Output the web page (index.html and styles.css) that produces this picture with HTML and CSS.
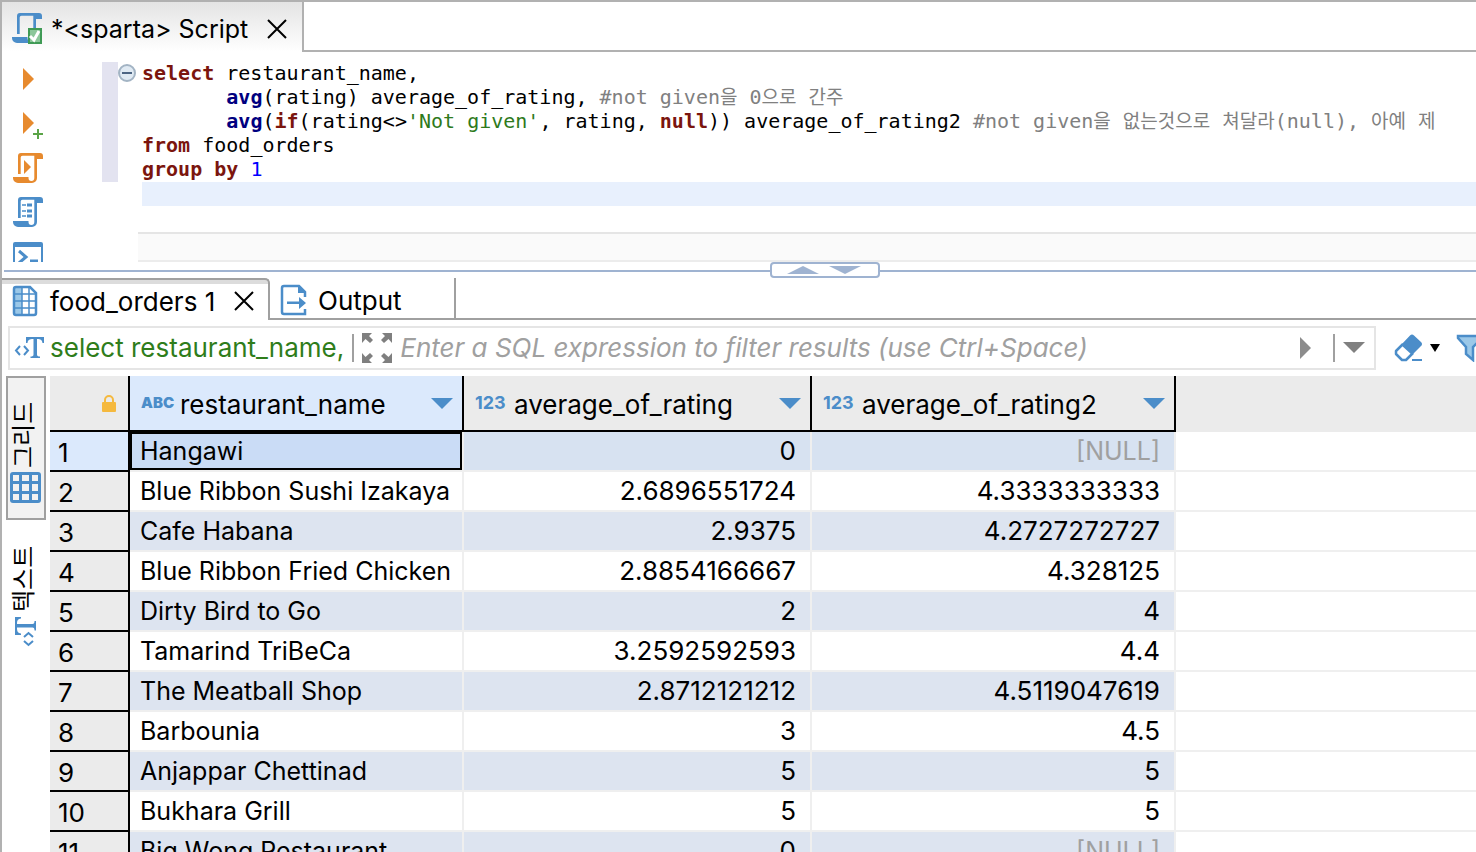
FILE: index.html
```html
<!DOCTYPE html>
<html lang="ko">
<head>
    <meta charset="UTF-8">
    <meta name="viewport" content="width=device-width, initial-scale=1.0">
    <title>*&lt;sparta&gt; Script</title>
    <link rel="stylesheet" href="styles.css">
</head>
<body>
<svg class="defs" aria-hidden="true">
    <symbol id="scroll" viewBox="0 0 30 30">
        <path fill="currentColor" d="M5 21V3a3 3 0 0 1 3-3h19a3 3 0 0 1 3 3v3h-6v19a5 5 0 0 1-5 5H5a5 5 0 0 1-5-5v-1h15.500v1a2.900 2.900 0 0 0 5.800 0V2.700H9.500a1.800 1.800 0 0 0-1.800 1.800V21z"/>
    </symbol>
    <symbol id="text-mode" viewBox="0 0 31 21">
        <path fill="none" stroke="currentColor" stroke-width="2" d="M6 9L2 13.500L6 18M10 9L14 13.500L10 18"/>
        <path fill="currentColor" d="M12 0H30V6H28.500C28 3 27 2 23 2V17.500C23 19 24 19.500 26 19.500V21H16.500V19.500C18.500 19.500 19.500 19 19.500 17.500V2C15 2 14 3 13.500 6H12z"/>
    </symbol>
    <symbol id="close" viewBox="0 0 20 20">
        <path fill="none" stroke="currentColor" stroke-width="2" d="M1 1L19 19M19 1L1 19"/>
    </symbol>
    <symbol id="arrow-down" viewBox="0 0 22 11">
        <path fill="currentColor" d="M0 0H22L11 11z"/>
    </symbol>
</svg>

<div class="window">
    <div class="editor-tabs">
        <div class="editor-tab">
            <svg class="icon blue" viewBox="0 0 32 32">
                <use href="#scroll" width="30" height="30"/>
                <rect x="16" y="15" width="14" height="16" fill="#3f9a55"/>
                <rect x="18" y="17" width="10" height="12" fill="#8cc79a"/>
                <path fill="none" stroke="#fff" stroke-width="3" d="M18 23L22 27L27 18"/>
            </svg>
            <span class="tab-title">*&lt;sparta&gt; Script</span>
            <button class="close" aria-label="Close script"><svg width="20" height="20"><use href="#close"/></svg></button>
        </div>
    </div>

    <div class="editor">
        <div class="toolbar">
            <button aria-label="Execute"><svg class="icon" viewBox="0 0 32 32"><path fill="#e78a2e" d="M11 5L22 16L11 27z"/></svg></button>
            <button aria-label="Execute in new tab"><svg class="icon" viewBox="0 0 32 32"><path fill="#e78a2e" d="M11 5L22 16L11 27z"/><path stroke="#5aa447" stroke-width="2" d="M21 27H31M26 22V32"/></svg></button>
            <button aria-label="Execute script"><svg class="icon orange" viewBox="0 0 32 32"><use href="#scroll" x="1" y="2" width="30" height="30"/><path fill="currentColor" d="M12 9L19 16L12 23z"/></svg></button>
            <button aria-label="Explain plan"><svg class="icon blue" viewBox="0 0 32 32"><use href="#scroll" x="1" y="2" width="30" height="30"/><path stroke="currentColor" stroke-width="3" d="M15 10H20M15 16H20M15 21H20"/><path stroke="currentColor" stroke-width="1.500" d="M10 10H14M10 16H14M10 21H14"/></svg></button>
            <button aria-label="Open console"><svg class="icon blue" viewBox="0 0 32 32"><path fill="currentColor" d="M3 3H29A2 2 0 0 1 31 5V31H29V8H3V31H1V5A2 2 0 0 1 3 3z"/><path fill="none" stroke="currentColor" stroke-width="3" d="M7 12L14 18L7 24"/><path stroke="currentColor" stroke-width="3" d="M18 22H26"/></svg></button>
        </div>
        <div class="ruler"></div>
        <div class="folding">
            <button aria-label="Collapse"><svg width="18" height="18" viewBox="0 0 18 18"><circle cx="9" cy="9" r="8" fill="#e0eaf3" stroke="#a3b4c4" stroke-width="2"/><path stroke="#4c6583" stroke-width="2" d="M4 9H14"/></svg></button>
        </div>
        <div class="code">
<pre><b class="kw">select</b> restaurant_name,
       <b class="fn">avg</b>(rating) average_of_rating, <span class="comment">#not given<span class="ko">을</span> 0<span class="ko">으로</span> <span class="ko">간주</span></span>
       <b class="fn">avg</b>(<b class="kw">if</b>(rating&lt;&gt;<span class="str">'Not given'</span>, rating, <b class="kw">null</b>)) average_of_rating2 <span class="comment">#not given<span class="ko">을</span> <span class="ko">없는것으로</span> <span class="ko">쳐달라</span>(null), <span class="ko">아예</span> <span class="ko">제</span></span>
<b class="kw">from</b> food_orders
<b class="kw">group</b> <b class="kw">by</b> <span class="num">1</span>
<span class="current-line"> </span></pre>
            <div class="scrollbar"></div>
        </div>
    </div>

    <div class="sash">
        <button aria-label="Resize panels"><svg width="74" height="8" viewBox="0 0 74 8"><path fill="#9fb3d1" d="M0 8L16 0L32 8zM42 0H74L58 8z"/></svg></button>
    </div>

    <div class="result-tabs">
        <div class="result-tab active">
            <svg class="icon blue" viewBox="0 0 32 32">
                <path fill="#9bc8e8" d="M2 2H10V30H2z"/>
                <path fill="none" stroke="currentColor" stroke-width="2.500" d="M4 2H18L24 8V28A2 2 0 0 1 22 30H4A2 2 0 0 1 2 28V4A2 2 0 0 1 4 2z"/>
                <path fill="none" stroke="currentColor" stroke-width="1.500" d="M10 2V30M17 2V30M2 9H24M2 16H24M2 23H24"/>
            </svg>
            <span class="tab-title">food_orders 1</span>
            <button class="close" aria-label="Close results"><svg width="20" height="20"><use href="#close"/></svg></button>
        </div>
        <button class="result-tab output">
            <svg class="icon blue" viewBox="0 0 32 32">
                <path fill="none" stroke="currentColor" stroke-width="2.500" d="M25 13V8L19 2H4A2 2 0 0 0 2 4V28A2 2 0 0 0 4 30H25V25"/>
                <path fill="currentColor" d="M18 1L26 9H18zM7 17.500H19V13L26 19L19 25V20H7z"/>
            </svg>
            <span class="tab-title">Output</span>
        </button>
    </div>

    <div class="filter-row">
        <div class="filter-box">
            <svg class="blue" width="31" height="21"><use href="#text-mode"/></svg>
            <label class="query" for="filter">select restaurant_name,</label>
            <span class="separator"></span>
            <button aria-label="Expand"><svg width="30" height="30" viewBox="0 0 30 30"><path fill="#7f7f7f" d="M0 0H10L7 3L11 7L8 10L3.500 6L0 10zM30 0H20L23 3L19 7L22 10L26.500 6L30 10zM0 30H10L7 27L11 23L8 20L3.500 24L0 20zM30 30H20L23 27L19 23L22 20L26.500 24L30 20z"/></svg></button>
            <input id="filter" type="text" placeholder="Enter a SQL expression to filter results (use Ctrl+Space)">
            <button aria-label="Apply filter"><svg width="11" height="22" viewBox="0 0 11 22"><path fill="#8c8c8c" d="M0 0L11 11L0 22z"/></svg></button>
            <span class="separator wide"></span>
            <button class="gray" aria-label="Filter history"><svg width="22" height="11"><use href="#arrow-down"/></svg></button>
        </div>
        <div class="filter-tools">
            <button class="blue" aria-label="Clear filters"><svg width="28" height="28" viewBox="0 0 28 28"><path fill="none" stroke="currentColor" stroke-width="2.500" stroke-linejoin="round" d="M9 10L2 17V20L8 26H12L19 19"/><path fill="currentColor" d="M16 1.500A3 3 0 0 1 20 1.500L27 8A2.500 2.500 0 0 1 27 12L18 21L7 11z"/><path stroke="currentColor" stroke-width="2" d="M18 26H28"/></svg></button>
            <button aria-label="Clear options"><svg width="10" height="8" viewBox="0 0 10 8"><path d="M0 0H10L5 8z"/></svg></button>
            <button class="funnel blue" aria-label="Custom filters"><svg width="28" height="28" viewBox="0 0 28 28"><path fill="#9bc8e8" stroke="currentColor" stroke-width="2.500" d="M2 2H26V4L17 13V26L10 20V13L2 4z"/></svg></button>
        </div>
    </div>

    <div class="results">
        <div class="side-tabs">
            <button class="side-tab selected">
                <svg class="blue" width="31" height="31" viewBox="0 0 31 31"><rect width="31" height="31" rx="3" fill="currentColor"/><path fill="#f2f2f2" d="M3 3h6v6H3zM12 3h7v6h-7zM22 3h6v6h-6zM3 12h6v7H3zM12 12h7v7h-7zM22 12h6v7h-6zM3 22h6v6H3zM12 22h7v6h-7zM22 22h6v6h-6z"/></svg>
                <span>그리드</span>
            </button>
            <button class="side-tab">
                <svg class="blue turned" width="31" height="31" viewBox="0 0 31 31"><use href="#text-mode" y="5" width="31" height="21"/></svg>
                <span>텍스트</span>
            </button>
        </div>
        <table class="grid">
            <colgroup><col class="col-no"><col class="col-name"><col class="col-avg"><col class="col-avg2"><col></colgroup>
            <thead>
            <tr>
                <th class="corner"><svg width="14" height="17" viewBox="0 0 14 17"><path fill="none" stroke="#f5b93e" stroke-width="2" d="M3 8V5A4 4 0 0 1 11 5V8"/><rect y="7" width="14" height="10" rx="1" fill="#f5b93e"/></svg></th>
                <th class="selected"><div class="head"><span class="type abc">ABC</span><span class="label">restaurant_name</span><button class="blue" aria-label="Filter restaurant_name"><svg width="22" height="11"><use href="#arrow-down"/></svg></button></div></th>
                <th><div class="head"><span class="type">123</span><span class="label">average_of_rating</span><button class="blue" aria-label="Filter average_of_rating"><svg width="22" height="11"><use href="#arrow-down"/></svg></button></div></th>
                <th><div class="head"><span class="type">123</span><span class="label">average_of_rating2</span><button class="blue" aria-label="Filter average_of_rating2"><svg width="22" height="11"><use href="#arrow-down"/></svg></button></div></th>
                <td class="rest"></td>
            </tr>
            </thead>
            <tbody>
            <tr class="current"><th>1</th><td class="focus">Hangawi</td><td>0</td><td class="null">[NULL]</td><td></td></tr>
            <tr><th>2</th><td>Blue Ribbon Sushi Izakaya</td><td>2.6896551724</td><td>4.3333333333</td><td></td></tr>
            <tr><th>3</th><td>Cafe Habana</td><td>2.9375</td><td>4.2727272727</td><td></td></tr>
            <tr><th>4</th><td>Blue Ribbon Fried Chicken</td><td>2.8854166667</td><td>4.328125</td><td></td></tr>
            <tr><th>5</th><td>Dirty Bird to Go</td><td>2</td><td>4</td><td></td></tr>
            <tr><th>6</th><td>Tamarind TriBeCa</td><td>3.2592592593</td><td>4.4</td><td></td></tr>
            <tr><th>7</th><td>The Meatball Shop</td><td>2.8712121212</td><td>4.5119047619</td><td></td></tr>
            <tr><th>8</th><td>Barbounia</td><td>3</td><td>4.5</td><td></td></tr>
            <tr><th>9</th><td>Anjappar Chettinad</td><td>5</td><td>5</td><td></td></tr>
            <tr><th>10</th><td>Bukhara Grill</td><td>5</td><td>5</td><td></td></tr>
            <tr><th>11</th><td>Big Wong Restaurant</td><td>0</td><td class="null">[NULL]</td><td></td></tr>
            </tbody>
        </table>
    </div>
</div>
</body>
</html>
```
FILE: styles.css
```css
* {
    box-sizing: border-box;
}
body {
    margin: 0;
    height: 100vh;
    overflow: hidden;
    background: #fff;
    color: #000;
    font-family: Inter, "Noto Sans CJK KR", sans-serif;
    font-size: 26px;
}
button {
    padding: 0;
    border: none;
    background: none;
    color: inherit;
    font: inherit;
    display: flex;
    align-items: center;
    flex-shrink: 0;
}
svg {
    display: block;
    flex-shrink: 0;
}
.defs {
    display: none;
}
.icon {
    width: 32px;
    height: 32px;
}
.blue {
    color: #4b8dc9;
}
.orange {
    color: #e78a2e;
}
.gray {
    color: #808080;
}
.window {
    height: 100%;
    display: flex;
    flex-direction: column;
    border-left: 2px solid #b1b1b1;
    border-top: 2px solid #b1b1b1;
    overflow: hidden;
}

/* editor */
.editor-tabs {
    display: flex;
    height: 50px;
    flex-shrink: 0;
}
.editor-tabs::after {
    content: "";
    flex: 1;
    border-left: 2px solid #b1b1b1;
    border-bottom: 2px solid #b1b1b1;
}
.editor-tab {
    width: 300px;
    display: flex;
    align-items: center;
    padding: 4px 0 0 10px;
    background: linear-gradient(#e4e4e4, #fff);
    font-size: 25px;
}
.editor-tab .tab-title {
    margin-left: 7px;
}
.close {
    margin-left: 19px;
}
.tab-title {
    white-space: nowrap;
}
.editor {
    display: flex;
    height: 210px;
    flex-shrink: 0;
    overflow: hidden;
}
.toolbar {
    width: 100px;
    padding: 11px 0 0 10px;
    display: flex;
    flex-direction: column;
    gap: 12px;
}
.ruler {
    width: 16px;
    height: 120px;
    margin-top: 10px;
    background: #e3e3f0;
}
.folding {
    width: 20px;
    padding-top: 12px;
}
.code {
    flex: 1;
    min-width: 0;
    padding-top: 9px;
    display: flex;
    flex-direction: column;
    justify-content: space-between;
}
.code pre {
    margin: 0 0 0 4px;
    font-family: "DejaVu Sans Mono", "Noto Sans CJK KR", monospace;
    font-size: 20px;
    line-height: 24px;
    height: 145px;
    overflow: hidden;
}
.kw {
    color: #7b150e;
}
.fn {
    color: #000080;
}
.str {
    color: #2e7a1c;
}
.num {
    color: #0000ff;
}
.comment {
    color: #808080;
}
.ko {
    font-size: 19px;
    line-height: 1;
}
.current-line {
    display: block;
    height: 24px;
    margin-top: 1px;
    background: #e8f0fd;
}
.scrollbar {
    height: 30px;
    background: #fafafa;
    border-top: 2px solid #e5e5e5;
    border-bottom: 2px solid #ececec;
}

/* divider between editor and results */
.sash {
    display: flex;
    align-items: center;
    height: 16px;
    flex-shrink: 0;
}
.sash::before,
.sash::after {
    content: "";
    height: 2px;
    margin-top: 2px;
    background: #9fb3d1;
}
.sash::before {
    width: 52%;
    margin-left: 2px;
}
.sash::after {
    flex: 1;
}
.sash button {
    width: 110px;
    height: 16px;
    padding-left: 15px;
    border: 2px solid #9fb3d1;
    border-radius: 4px;
}

/* result tabs */
.result-tabs {
    display: flex;
    height: 42px;
    flex-shrink: 0;
}
.result-tabs::after {
    content: "";
    flex: 1;
    border-bottom: 2px solid #a0a0a0;
}
.result-tab {
    display: flex;
    align-items: center;
    padding: 4px 0 0 10px;
}
.result-tab.active {
    width: 268px;
    border-top: 2px solid #a0a0a0;
    border-right: 2px solid #a0a0a0;
    border-top-right-radius: 5px;
    background: linear-gradient(#dcdcdc 4px, #fff 4px);
    padding-top: 2px;
}
.result-tab .tab-title {
    margin-left: 6px;
}
.result-tab.output {
    width: 186px;
    border-right: 2px solid #a0a0a0;
    border-bottom: 2px solid #a0a0a0;
}

/* filter */
.filter-row {
    display: flex;
    align-items: center;
    height: 56px;
    flex-shrink: 0;
    padding: 0 0 1px 6px;
}
.filter-box {
    flex: 1;
    min-width: 0;
    height: 44px;
    display: flex;
    align-items: center;
    padding: 0 9px 0 4px;
    border: 2px solid #e5e5e5;
}
.query {
    margin-left: 5px;
    color: #2f7d1b;
    white-space: nowrap;
}
.separator {
    width: 2px;
    height: 28px;
    margin: 0 8px;
    background: #a0a0a0;
    flex-shrink: 0;
}
.separator.wide {
    margin-left: 22px;
}
.filter-box input {
    flex: 1;
    min-width: 0;
    padding: 0 8px;
    border: none;
    outline: none;
    background: none;
    font: inherit;
}
.filter-box input::placeholder {
    color: #a0a0a0;
    font-style: italic;
    opacity: 1;
}
.filter-tools {
    width: 100px;
    display: flex;
    align-items: center;
    gap: 8px;
    padding-left: 18px;
    overflow: hidden;
}
.funnel {
    margin-left: 8px;
}

/* result grid */
.results {
    display: flex;
    flex: 1;
    min-height: 0;
    align-items: flex-start;
}
.side-tabs {
    width: 48px;
    flex-shrink: 0;
    padding-left: 4px;
}
.side-tab {
    writing-mode: vertical-rl;
    text-orientation: sideways;
    transform: rotate(180deg);
    width: 40px;
    height: 144px;
    padding: 15px 0 0;
    gap: 4px;
    border: 2px solid transparent;
    font-size: 24px;
    line-height: 32px;
}
.side-tab span {
    padding-left: 4px;
}
.side-tab.selected {
    border-color: #a0a0a0;
    background: #f2f2f2;
}
.turned {
    transform: rotate(90deg);
}
.grid {
    flex: 1;
    min-width: 0;
    table-layout: fixed;
    border-collapse: separate;
    border-spacing: 0;
}
.col-no {
    width: 80px;
}
.col-name {
    width: 334px;
}
.col-avg {
    width: 348px;
}
.col-avg2 {
    width: 364px;
}
.grid th,
.grid td {
    height: 40px;
    padding: 0;
    font-weight: normal;
    line-height: 32px;
    white-space: nowrap;
    overflow: hidden;
}
.grid th {
    background: #ebebeb;
    border-right: 2px solid #000;
    border-bottom: 2px solid #000;
    text-align: left;
}
.grid thead th,
.grid thead td {
    height: 56px;
}
.grid thead .rest {
    background: #ebebeb;
    border: none;
}
.grid .corner svg {
    margin-left: 52px;
}
.grid thead .selected {
    background: #dbe9fc;
}
.head {
    display: flex;
    align-items: center;
    padding: 0 9px 0 11px;
}
.head .label {
    flex: 1;
    padding-top: 4px;
}
.type {
    width: 39px;
    color: #4b8dc9;
    font-size: 18px;
    font-weight: 700;
    line-height: 28px;
}
.type.abc {
    font-size: 15px;
    font-weight: 900;
}
.grid tbody th {
    padding: 4px 0 0 8px;
}
.grid tbody td {
    padding: 0 14px 0 10px;
    border-right: 2px solid #efefef;
    border-bottom: 2px solid #efefef;
    text-align: right;
}
.grid tbody td:nth-child(2) {
    padding-right: 0;
    font-size: 25px;
    text-align: left;
}
.grid tbody tr:nth-child(odd) td {
    background: #dde4f0;
}
.grid tbody tr.current td {
    background: #d7e2f1;
}
.grid tbody tr td:last-child {
    background: #fff;
    border-right: none;
}
.grid tbody .current th {
    background: #dbe9fc;
}
.grid tbody .current .focus {
    background: #cadcf6;
    box-shadow: inset 0 0 0 2px #000;
}
.grid .null {
    color: #a0a0a0;
    font-size: 25px;
}
```
